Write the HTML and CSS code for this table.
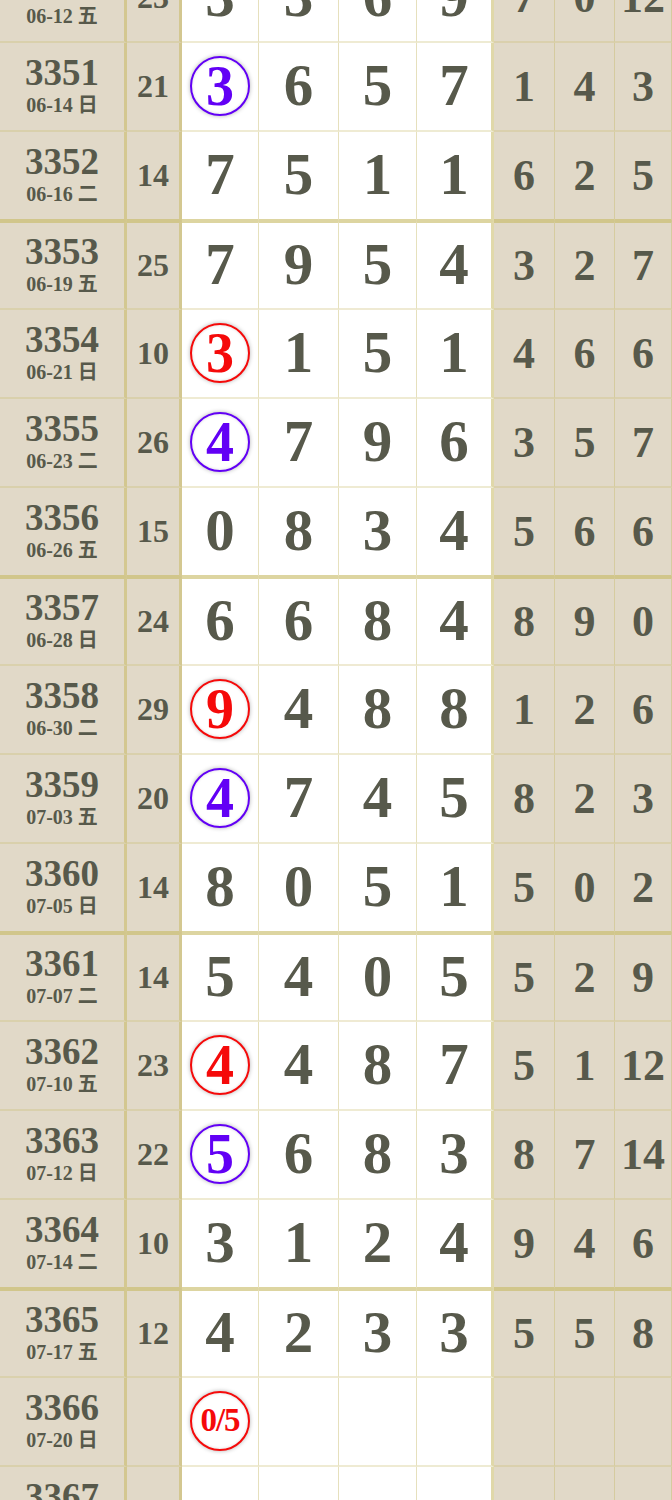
FILE: index.html
```html
<!DOCTYPE html>
<html lang="zh">
<head>
  <meta charset="UTF-8" />
  <meta name="viewport" content="width=device-width, initial-scale=1.0" />
  <title>走势图</title>
  <link rel="stylesheet" href="styles.css">
</head>
<body>
  <div class="board">
    <div class="row">
      <div class="c per"><b>3350</b><i>06-12 五</i></div><div class="c sum">23</div>
      <div class="c d">3</div><div class="c d">3</div><div class="c d">6</div><div class="c d">9</div>
      <div class="c s">7</div><div class="c s">0</div><div class="c s">12</div>
    </div>
    <div class="row">
      <div class="c per"><b>3351</b><i>06-14 日</i></div><div class="c sum">21</div>
      <div class="c d"><span class="ring blue">3</span></div><div class="c d">6</div><div class="c d">5</div><div class="c d">7</div>
      <div class="c s">1</div><div class="c s">4</div><div class="c s">3</div>
    </div>
    <div class="row end">
      <div class="c per"><b>3352</b><i>06-16 二</i></div><div class="c sum">14</div>
      <div class="c d">7</div><div class="c d">5</div><div class="c d">1</div><div class="c d">1</div>
      <div class="c s">6</div><div class="c s">2</div><div class="c s">5</div>
    </div>
    <div class="row start">
      <div class="c per"><b>3353</b><i>06-19 五</i></div><div class="c sum">25</div>
      <div class="c d">7</div><div class="c d">9</div><div class="c d">5</div><div class="c d">4</div>
      <div class="c s">3</div><div class="c s">2</div><div class="c s">7</div>
    </div>
    <div class="row">
      <div class="c per"><b>3354</b><i>06-21 日</i></div><div class="c sum">10</div>
      <div class="c d"><span class="ring red">3</span></div><div class="c d">1</div><div class="c d">5</div><div class="c d">1</div>
      <div class="c s">4</div><div class="c s">6</div><div class="c s">6</div>
    </div>
    <div class="row">
      <div class="c per"><b>3355</b><i>06-23 二</i></div><div class="c sum">26</div>
      <div class="c d"><span class="ring blue">4</span></div><div class="c d">7</div><div class="c d">9</div><div class="c d">6</div>
      <div class="c s">3</div><div class="c s">5</div><div class="c s">7</div>
    </div>
    <div class="row end">
      <div class="c per"><b>3356</b><i>06-26 五</i></div><div class="c sum">15</div>
      <div class="c d">0</div><div class="c d">8</div><div class="c d">3</div><div class="c d">4</div>
      <div class="c s">5</div><div class="c s">6</div><div class="c s">6</div>
    </div>
    <div class="row start">
      <div class="c per"><b>3357</b><i>06-28 日</i></div><div class="c sum">24</div>
      <div class="c d">6</div><div class="c d">6</div><div class="c d">8</div><div class="c d">4</div>
      <div class="c s">8</div><div class="c s">9</div><div class="c s">0</div>
    </div>
    <div class="row">
      <div class="c per"><b>3358</b><i>06-30 二</i></div><div class="c sum">29</div>
      <div class="c d"><span class="ring red">9</span></div><div class="c d">4</div><div class="c d">8</div><div class="c d">8</div>
      <div class="c s">1</div><div class="c s">2</div><div class="c s">6</div>
    </div>
    <div class="row">
      <div class="c per"><b>3359</b><i>07-03 五</i></div><div class="c sum">20</div>
      <div class="c d"><span class="ring blue">4</span></div><div class="c d">7</div><div class="c d">4</div><div class="c d">5</div>
      <div class="c s">8</div><div class="c s">2</div><div class="c s">3</div>
    </div>
    <div class="row end">
      <div class="c per"><b>3360</b><i>07-05 日</i></div><div class="c sum">14</div>
      <div class="c d">8</div><div class="c d">0</div><div class="c d">5</div><div class="c d">1</div>
      <div class="c s">5</div><div class="c s">0</div><div class="c s">2</div>
    </div>
    <div class="row start">
      <div class="c per"><b>3361</b><i>07-07 二</i></div><div class="c sum">14</div>
      <div class="c d">5</div><div class="c d">4</div><div class="c d">0</div><div class="c d">5</div>
      <div class="c s">5</div><div class="c s">2</div><div class="c s">9</div>
    </div>
    <div class="row">
      <div class="c per"><b>3362</b><i>07-10 五</i></div><div class="c sum">23</div>
      <div class="c d"><span class="ring red">4</span></div><div class="c d">4</div><div class="c d">8</div><div class="c d">7</div>
      <div class="c s">5</div><div class="c s">1</div><div class="c s">12</div>
    </div>
    <div class="row">
      <div class="c per"><b>3363</b><i>07-12 日</i></div><div class="c sum">22</div>
      <div class="c d"><span class="ring blue">5</span></div><div class="c d">6</div><div class="c d">8</div><div class="c d">3</div>
      <div class="c s">8</div><div class="c s">7</div><div class="c s">14</div>
    </div>
    <div class="row end">
      <div class="c per"><b>3364</b><i>07-14 二</i></div><div class="c sum">10</div>
      <div class="c d">3</div><div class="c d">1</div><div class="c d">2</div><div class="c d">4</div>
      <div class="c s">9</div><div class="c s">4</div><div class="c s">6</div>
    </div>
    <div class="row start">
      <div class="c per"><b>3365</b><i>07-17 五</i></div><div class="c sum">12</div>
      <div class="c d">4</div><div class="c d">2</div><div class="c d">3</div><div class="c d">3</div>
      <div class="c s">5</div><div class="c s">5</div><div class="c s">8</div>
    </div>
    <div class="row">
      <div class="c per"><b>3366</b><i>07-20 日</i></div><div class="c sum"></div>
      <div class="c d"><span class="ring red frac">0/5</span></div><div class="c d"></div><div class="c d"></div><div class="c d"></div>
      <div class="c s"></div><div class="c s"></div><div class="c s"></div>
    </div>
    <div class="row">
      <div class="c per"><b>3367</b><i>07-22 二</i></div><div class="c sum"></div>
      <div class="c d"></div><div class="c d"></div><div class="c d"></div><div class="c d"></div>
      <div class="c s"></div><div class="c s"></div><div class="c s"></div>
    </div>
  </div>
</body>
</html>
```

FILE: styles.css
```css
body {
  margin: 0;
  background: #fff;
  font-family: "Liberation Serif", "Noto Sans CJK SC", serif;
  font-weight: bold;
  color: #57594b;
}
.board {
  margin-top: -46px;
}
.row {
  display: grid;
  grid-template-columns: 127px 55px 77px 80px 78px 77px 61px 60px 57px;
  height: 89px;
}
.c {
  display: flex;
  align-items: center;
  justify-content: center;
  box-sizing: border-box;
  border-bottom: 2px solid rgba(200, 188, 110, 0.3);
  border-right: 1px solid rgba(200, 188, 110, 0.45);
  background: #e1d9c8;
}
.row.end .c {
  border-bottom: 2px solid rgba(200, 186, 100, 0.6);
}
.row.start .c {
  border-top: 2px solid rgba(200, 186, 100, 0.6);
}
.per, .sum {
  border-right: 3px solid rgba(200, 186, 100, 0.55);
}
.d:nth-child(6) {
  border-right: 3px solid rgba(200, 186, 100, 0.55);
}
.per {
  flex-direction: column;
  gap: 7px;
  padding-bottom: 1px;
}
.per b {
  font-size: 37px;
  line-height: 30px;
}
.per i {
  font-style: normal;
  font-size: 20px;
  line-height: 20px;
}
.sum {
  font-size: 32px;
}
.d {
  background: #fff;
  font-size: 59px;
  padding-bottom: 2px;
}
.s {
  font-size: 44px;
}
.ring {
  width: 56px;
  height: 56px;
  border: 2px solid;
  border-radius: 50%;
  display: flex;
  align-items: center;
  justify-content: center;
  font-size: 56px;
  box-shadow: 0 0 4px rgba(0, 0, 0, 0.3), inset 0 0 3px rgba(0, 0, 0, 0.15);
  background: #fff;
}
.ring.blue {
  color: #6200f5;
}
.ring.red {
  color: #f50a0a;
}
.ring.frac {
  font-size: 33px;
  letter-spacing: -1px;
}
```
